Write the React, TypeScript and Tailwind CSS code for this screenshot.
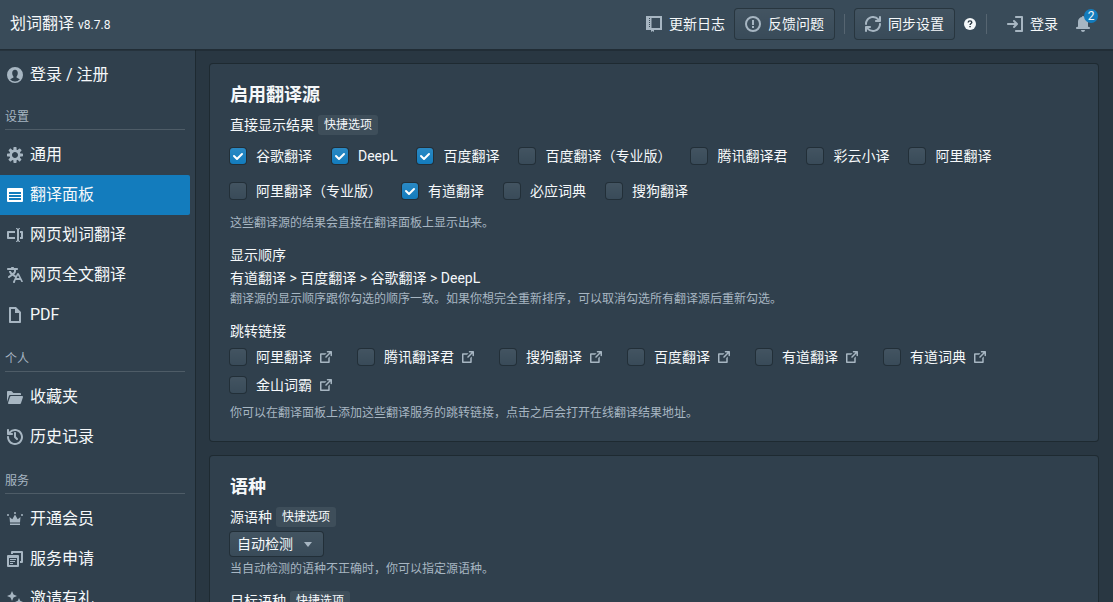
import { useState } from "react";
import type { ReactNode } from "react";

const icons: Record<string, ReactNode> = {
  changelog: (
    <path fillRule="evenodd" d="M0 0h16v14H8v2l-1.500-1L5 16v-2H0V0zm5.500 2v10H14V2H5.500zM4 2H3v1h1V2zm0 2H3v1h1V4zm0 2H3v1h1V6zm0 2H3v1h1V8zm0 2H3v1h1v-1z" />
  ),
  issue: <path d="M8 16A8 8 0 118 0a8 8 0 010 16zm0-2A6 6 0 108 2a6 6 0 000 12zm1-2H7v-2h2v2zm0-3H7V4h2v5z" />,
  refresh: (
    <path d="M14.990 6.990c-.55 0-1 .45-1 1 0 3.310-2.690 6-6 6-1.770 0-3.360-.78-4.460-2h1.460c.55 0 1-.45 1-1s-.45-1-1-1h-4c-.55 0-1 .45-1 1v4c0 .55.45 1 1 1s1-.45 1-1v-1.740a7.950 7.950 0 006 2.740c4.420 0 8-3.580 8-8 0-.55-.45-1-1-1zm0-7c-.55 0-1 .45-1 1v1.740a7.950 7.950 0 00-6-2.740c-4.420 0-8 3.580-8 8 0 .55.45 1 1 1s1-.45 1-1c0-3.310 2.690-6 6-6 1.770 0 3.360.78 4.460 2h-1.460c-.55 0-1 .45-1 1s.45 1 1 1h4c.55 0 1-.45 1-1v-4c0-.55-.45-1-1-1z" />
  ),
  login: (
    <path d="M11 8c0-.28-.11-.53-.29-.71l-3-3a1.003 1.003 0 00-1.420 1.420L7.590 7H1c-.55 0-1 .45-1 1s.45 1 1 1h6.590L6.300 10.290c-.19.18-.3.43-.3.71a1.003 1.003 0 001.710.71l3-3c.18-.18.29-.43.29-.71zm4-8H9c-.55 0-1 .45-1 1s.45 1 1 1h5v12H9c-.55 0-1 .45-1 1s.45 1 1 1h6c.55 0 1-.45 1-1V1c0-.55-.45-1-1-1z" />
  ),
  bell: (
    <path d="M8 16c1.100 0 2-.9 2-2H6c0 1.100.9 2 2 2zm6-5c-.55 0-1-.45-1-1V6c0-2.430-1.730-4.450-4.020-4.900 0-.04.02-.06.02-.1 0-.55-.45-1-1-1S7 .45 7 1c0 .04.02.06.02.1A4.992 4.992 0 003 6v4c0 .55-.45 1-1 1s-1 .45-1 1 .45 1 1 1h12c.55 0 1-.45 1-1s-.45-1-1-1z" />
  ),
  user: (
    <path fillRule="evenodd" d="M8 0a8 8 0 100 16A8 8 0 008 0zm0 14.500c-1.900 0-3.600-.8-4.800-2 .3-.8 2.400-1.300 3-1.700.4-.3.4-1 .2-1.400C5.700 8.700 5.200 7.500 5.200 6c0-1.900 1-3.200 2.800-3.200s2.800 1.300 2.800 3.200c0 1.500-.5 2.700-1.200 3.400-.2.4-.2 1.100.2 1.400.6.4 2.700.9 3 1.700a6.600 6.600 0 01-4.800 2z" />
  ),
  cog: (
    <path d="M15.190 6.390h-1.850c-.11-.37-.27-.71-.45-1.040l1.360-1.360c.31-.31.31-.82 0-1.130l-1.130-1.130a.803.803 0 00-1.130 0l-1.360 1.360c-.33-.17-.67-.33-1.040-.44V.79c0-.44-.36-.8-.8-.8h-1.600c-.44 0-.8.36-.8.8v1.860c-.39.12-.75.28-1.100.47l-1.300-1.300c-.3-.3-.79-.3-1.090 0L1.820 2.910c-.3.3-.3.79 0 1.090l1.300 1.300c-.2.34-.36.7-.48 1.090H.79c-.44 0-.8.36-.8.8v1.600c0 .44.36.8.8.8h1.850c.11.37.27.71.45 1.040l-1.360 1.360c-.31.31-.31.82 0 1.130l1.130 1.130c.31.31.82.31 1.130 0l1.360-1.360c.33.18.67.33 1.040.44v1.860c0 .44.36.8.8.8h1.600c.44 0 .8-.36.8-.8v-1.860c.39-.12.75-.28 1.100-.47l1.300 1.300c.3.3.79.3 1.090 0l1.090-1.090c.3-.3.3-.79 0-1.090l-1.300-1.300c.19-.35.36-.71.48-1.100h1.850c.44 0 .8-.36.8-.8v-1.600a.816.816 0 00-.81-.79zm-7.200 4.600c-1.660 0-3-1.340-3-3s1.340-3 3-3 3 1.340 3 3-1.340 3-3 3z" />
  ),
  panel: <path fillRule="evenodd" d="M1 1h14a1 1 0 011 1v12a1 1 0 01-1 1H1a1 1 0 01-1-1V2a1 1 0 011-1zm1 4v2h12V5H2zm0 3v2h12V8H2zm0 3v2h12v-2H2z" />,
  textSelect: (
    <path d="M8 10H2V6h6V4H1c-.55 0-1 .45-1 1v6c0 .55.45 1 1 1h7v-2zm7-6h-2v2h1v4h-1v2h2c.55 0 1-.45 1-1V5c0-.55-.45-1-1-1zm-3 9V3c0-.55.45-1 1-1V1c-.8 0-1.500.3-2 .8-.5-.5-1.200-.8-2-.8v1c.55 0 1 .45 1 1v10c0 .55-.45 1-1 1v1c.8 0 1.500-.3 2-.8.5.5 1.200.8 2 .8v-1c-.55 0-1-.45-1-1z" />
  ),
  translate: (
    <path fillRule="evenodd" d="M15.890 14.560l-3.990-8h-.01c-.17-.33-.5-.56-.89-.56s-.72.23-.89.56h-.01L9 8.760 7.170 7.380l.23-.18C8.370 6.470 9 5.310 9 4V3h1c.55 0 1-.45 1-1s-.45-1-1-1H7c0-.55-.45-1-1-1H5c-.55 0-1 .45-1 1H1c-.55 0-1 .45-1 1s.45 1 1 1h6v1c0 .66-.32 1.250-.82 1.610l-.68.51-.68-.5C4.320 5.250 4 4.660 4 4H2c0 1.310.63 2.470 1.600 3.200l.23.17L1.400 9.200c-.24.19-.4.470-.4.8 0 .55.45 1 1 1 .23 0 .42-.09.6-.2l2.900-2.170 2.600 1.950-1.990 3.980c-.06.13-.11.28-.11.44 0 .55.45 1 1 1 .39 0 .72-.23.89-.56L8.620 13h4.760l.73 1.440c.17.33.5.56.89.56.55 0 1-.45 1-1 0-.16-.05-.31-.11-.44zM9.620 11L11 8.240 12.380 11H9.620z" />
  ),
  document: <path d="M9 0H3c-.55 0-1 .45-1 1v14c0 .55.45 1 1 1h10c.55 0 1-.45 1-1V5L9 0zm3 14H4V2h4v4h4v8z" />,
  folder: (
    <path d="M2.060 6.690c.14-.4.5-.69.94-.69h11V5c0-.55-.45-1-1-1H6.410l-1.700-1.710A.997.997 0 004 2H1c-.55 0-1 .45-1 1v9.840l2.050-6.150h.01zM16 8c0-.55-.45-1-1-1H4a.99.99 0 00-.94.69l-2 6c-.04.09-.06.2-.06.31 0 .55.45 1 1 1h11c.44 0 .81-.29.94-.69l2-6c.04-.09.06-.2.06-.31z" />
  ),
  history: (
    <path d="M8 3c-.55 0-1 .45-1 1v4c0 .28.11.53.29.71l2 2a1.003 1.003 0 001.420-1.420L9 7.590V4c0-.55-.45-1-1-1zm0-3a7.950 7.950 0 00-6 2.740V1c0-.55-.45-1-1-1s-1 .45-1 1v4c0 .55.45 1 1 1h4c.55 0 1-.45 1-1s-.45-1-1-1H3.540C4.640 2.780 6.230 2 8 2c3.310 0 6 2.690 6 6s-2.690 6-6 6-6-2.690-6-6c0-.55-.45-1-1-1s-1 .45-1 1c0 4.420 3.580 8 8 8s8-3.580 8-8-3.580-8-8-8z" />
  ),
  crown: (
    <>
      <path d="M2.500 6l2.800 2.200L8 3.500l2.700 4.700L13.500 6 13 11.500H3L2.500 6zM3 12.500h10V14H3z" />
      <circle cx="1" cy="4" r="1" />
      <circle cx="8" cy="2" r="1" />
      <circle cx="15" cy="4" r="1" />
    </>
  ),
  applications: (
    <path fillRule="evenodd" d="M5 0h10a1 1 0 011 1v10a1 1 0 01-1 1h-2v-2h1V2H6v1H4V1a1 1 0 011-1zM1 4h10a1 1 0 011 1v10a1 1 0 01-1 1H1a1 1 0 01-1-1V5a1 1 0 011-1zm1 3v7h8V7H2zm1 1h6v1H3V8zm0 2h5v1H3v-1zm0 2h3v1H3v-1z" />
  ),
  sparkle: <path d="M5 0l1.500 3.500L10 5 6.500 6.500 5 10 3.500 6.500 0 5l3.500-1.500L5 0zm7 7l1.200 2.800L16 11l-2.800 1.200L12 15l-1.200-2.800L8 11l2.800-1.200L12 7zM4 11l.8 1.700 1.700.8-1.700.8L4 16l-.8-1.700-1.700-.8 1.700-.8L4 11z" />,
  share: (
    <path d="M10.990 13.990h-9v-9h4.760l2-2H.99c-.55 0-1 .45-1 1v11c0 .55.45 1 1 1h11c.55 0 1-.45 1-1V7.240l-2 2v4.750zm4-14h-5c-.55 0-1 .45-1 1s.45 1 1 1h2.590L7.290 7.280a1 1 0 00-.3.71 1.003 1.003 0 001.710.71l5.290-5.290V6c0 .55.45 1 1 1s1-.45 1-1V1c0-.56-.45-1.010-1-1.010z" />
  ),
};

function Icon({ name, className = "size-4 text-[#a7b6c2]" }: { name: string; className?: string }) {
  return (
    <svg viewBox="0 0 16 16" fill="currentColor" className={`shrink-0 ${className}`} aria-hidden="true">
      {icons[name]}
    </svg>
  );
}

const navGroups = [
  {
    title: "设置",
    items: [
      { icon: "cog", label: "通用" },
      { icon: "panel", label: "翻译面板" },
      { icon: "textSelect", label: "网页划词翻译" },
      { icon: "translate", label: "网页全文翻译" },
      { icon: "document", label: "PDF" },
    ],
  },
  {
    title: "个人",
    items: [
      { icon: "folder", label: "收藏夹" },
      { icon: "history", label: "历史记录" },
    ],
  },
  {
    title: "服务",
    items: [
      { icon: "crown", label: "开通会员" },
      { icon: "applications", label: "服务申请" },
      { icon: "sparkle", label: "邀请有礼" },
    ],
  },
];

const sources = [
  "谷歌翻译",
  "DeepL",
  "百度翻译",
  "百度翻译（专业版）",
  "腾讯翻译君",
  "彩云小译",
  "阿里翻译",
  "阿里翻译（专业版）",
  "有道翻译",
  "必应词典",
  "搜狗翻译",
];

const links = ["阿里翻译", "腾讯翻译君", "搜狗翻译", "百度翻译", "有道翻译", "有道词典", "金山词霸"];

function NavButton({ icon, children, outlined }: { icon: string; children: ReactNode; outlined?: boolean }) {
  return (
    <button
      type="button"
      className={`flex h-[30px] items-center gap-[7px] rounded-[3px] px-2.5 whitespace-nowrap ${
        outlined ? "bg-[#394b59] bg-linear-to-b from-white/5 to-transparent shadow-[0_0_0_1px_rgba(16,22,26,0.4)]" : ""
      }`}
    >
      <Icon name={icon} />
      {children}
    </button>
  );
}

function Divider() {
  return <span className="mx-2.5 h-5 w-px bg-white/15" />;
}

function Checkbox({ label, checked, onChange }: { label: string; checked: boolean; onChange: () => void }) {
  return (
    <label className="flex items-center gap-2.5 whitespace-nowrap">
      <span className="relative flex size-4">
        <input
          type="checkbox"
          checked={checked}
          onChange={onChange}
          className="size-4 appearance-none rounded-[3px] bg-[#394b59] bg-linear-to-b from-white/5 to-transparent shadow-[0_0_0_1px_rgba(16,22,26,0.4)] checked:bg-[#137cbd] checked:from-white/10"
        />
        {checked && (
          <svg viewBox="0 0 16 16" className="pointer-events-none absolute inset-0 size-4" aria-hidden="true">
            <path d="M4 8l3 3 5-5" fill="none" stroke="white" strokeWidth="2" strokeLinecap="round" strokeLinejoin="round" />
          </svg>
        )}
      </span>
      {label}
    </label>
  );
}

function Card({ title, children }: { title: string; children: ReactNode }) {
  return (
    <section className="shrink-0 rounded-[3px] bg-[#30404d] px-5 pt-[21px] pb-5 shadow-[0_0_0_1px_rgba(16,22,26,0.4)]">
      <h2 className="mb-2.5 text-lg leading-5 font-bold">{title}</h2>
      <div className="flex flex-col gap-3.5">{children}</div>
    </section>
  );
}

function Tag() {
  return <span className="rounded-[3px] bg-[#3e4e5a] px-1.5 text-xs leading-5">快捷选项</span>;
}

function Note({ children }: { children: ReactNode }) {
  return <p className="text-xs leading-4 text-[#a7b6c2]">{children}</p>;
}

export default function App() {
  const [active, setActive] = useState("翻译面板");
  const [enabled, setEnabled] = useState(["有道翻译", "百度翻译", "谷歌翻译", "DeepL"]);
  const [jumps, setJumps] = useState<string[]>([]);

  const toggle = (list: string[], item: string) =>
    list.includes(item) ? list.filter((i) => i !== item) : [...list, item];

  return (
    <div className="flex h-screen flex-col overflow-hidden bg-[#293742] font-[Roboto,'Noto_Sans_CJK_SC',sans-serif] text-sm leading-5 text-[#f5f8fa]">
      <header className="z-10 flex h-[49px] shrink-0 items-center justify-between bg-[#394b59] pr-[15px] pb-px pl-2.5 shadow-[0_1px_0_1px_rgba(16,22,26,0.3)]">
        <h1 className="flex items-baseline gap-1 text-base whitespace-nowrap">
          划词翻译 <span className="text-xs">v8.7.8</span>
        </h1>
        <div className="flex items-center">
          <NavButton icon="changelog">更新日志</NavButton>
          <NavButton icon="issue" outlined>反馈问题</NavButton>
          <Divider />
          <NavButton icon="refresh" outlined>同步设置</NavButton>
          <button type="button" aria-label="帮助" className="ml-2.5">
            <svg viewBox="0 0 12 12" className="size-3" aria-hidden="true">
              <circle cx="6" cy="6" r="6" fill="#f5f8fa" />
              <path d="M4.200 4.600C4.200 3.500 5 2.900 6 2.900s1.800.6 1.800 1.500C7.800 5.500 6.100 5.600 6.100 7" fill="none" stroke="#293742" strokeWidth="1.400" />
              <path d="M5.300 7.900h1.500v1.400H5.300z" fill="#293742" />
            </svg>
          </button>
          <Divider />
          <NavButton icon="login">登录</NavButton>
          <button type="button" aria-label="通知" className="relative p-[7px]">
            <Icon name="bell" />
            <span className="absolute top-0 right-0 size-3.5 rounded-full bg-[#137cbd] text-center text-xs leading-3.5">2</span>
          </button>
        </div>
      </header>

      <div className="flex min-h-0 flex-1 pt-px">
        <nav className="w-[195px] shrink-0 overflow-hidden bg-[#30404d] pt-[7px] pr-[5px] text-base shadow-[1px_0_0_rgba(16,22,26,0.4)]">
          <a href="#login" className="flex h-9 items-center gap-[7px] pl-[7px]">
            <Icon name="user" />
            登录 / 注册
          </a>
          {navGroups.map((group) => (
            <div key={group.title}>
              <h3 className="mr-[5px] mb-[5px] ml-[5px] flex h-[37px] items-end border-b border-white/15 pb-1 text-xs leading-4 text-[#a7b6c2]">
                {group.title}
              </h3>
              {group.items.map((item) => (
                <a
                  key={item.label}
                  href={`#${item.icon}`}
                  onClick={() => setActive(item.label)}
                  className={`flex h-10 items-center gap-[7px] rounded-r-[2px] pl-[7px] ${active === item.label ? "bg-[#137cbd]" : ""}`}
                >
                  <Icon name={item.icon} className={active === item.label ? "size-4 text-white" : "size-4 text-[#a7b6c2]"} />
                  {item.label}
                </a>
              ))}
            </div>
          ))}
        </nav>

        <main className="flex min-w-0 flex-1 flex-col gap-[15px] overflow-hidden px-[15px] pt-3.5">
          <Card title="启用翻译源">
            <div>
              <div className="mb-[3px] flex gap-1">
                直接显示结果 <Tag />
              </div>
              <div className="mb-[7px] flex flex-wrap gap-x-5">
                {sources.map((name) => (
                  <div key={name} className="flex h-[35px] items-center">
                    <Checkbox label={name} checked={enabled.includes(name)} onChange={() => setEnabled(toggle(enabled, name))} />
                  </div>
                ))}
              </div>
              <Note>这些翻译源的结果会直接在翻译面板上显示出来。</Note>
            </div>

            <div>
              <div className="mb-[3px]">显示顺序</div>
              <div className="mb-[3px]">{enabled.join(" > ")}</div>
              <Note>翻译源的显示顺序跟你勾选的顺序一致。如果你想完全重新排序，可以取消勾选所有翻译源后重新勾选。</Note>
            </div>

            <div>
              <div className="mb-0.5">跳转链接</div>
              <div className="mb-1.5 flex flex-wrap gap-x-[26px]">
                {links.map((name) => (
                  <div key={name} className="flex h-7 items-center gap-2">
                    <Checkbox label={name} checked={jumps.includes(name)} onChange={() => setJumps(toggle(jumps, name))} />
                    <a href="#open" aria-label={name}>
                      <Icon name="share" className="size-3 text-[#a7b6c2]" />
                    </a>
                  </div>
                ))}
              </div>
              <Note>你可以在翻译面板上添加这些翻译服务的跳转链接，点击之后会打开在线翻译结果地址。</Note>
            </div>
          </Card>

          <Card title="语种">
            <div>
              <div className="mb-[5px] flex gap-1">
                <label htmlFor="source-lang">源语种</label> <Tag />
              </div>
              <div className="relative mb-[5px] flex w-fit">
                <select
                  id="source-lang"
                  className="h-6 appearance-none rounded-[3px] bg-[#394b59] bg-linear-to-b from-white/5 to-transparent pr-[30px] pl-[7px] shadow-[0_0_0_1px_rgba(16,22,26,0.4)]"
                >
                  <option>自动检测</option>
                </select>
                <svg viewBox="0 0 8 5" className="pointer-events-none absolute top-2.5 right-[11px] h-[5px] w-2 text-[#a7b6c2]" aria-hidden="true">
                  <path d="M0 0h8L4 5z" fill="currentColor" />
                </svg>
              </div>
              <Note>当自动检测的语种不正确时，你可以指定源语种。</Note>
            </div>
            <div className="flex gap-1">
              目标语种 <Tag />
            </div>
          </Card>
        </main>
      </div>
    </div>
  );
}
